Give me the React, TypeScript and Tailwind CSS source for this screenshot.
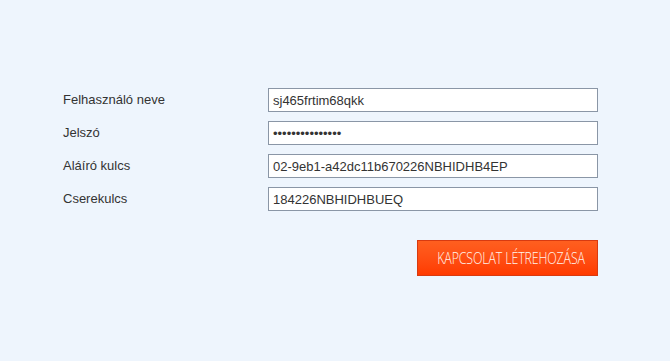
import React from "react";

const rows = [
  { label: "Felhasználó neve", value: "sj465frtim68qkk", type: "text" },
  { label: "Jelszó", value: "abcdefghijklmno", type: "password" },
  { label: "Aláíró kulcs", value: "02-9eb1-a42dc11b670226NBHIDHB4EP", type: "text" },
  { label: "Cserekulcs", value: "184226NBHIDHBUEQ", type: "text" },
];

export default function App() {
  return (
    <div className="w-[670px] h-[361px] bg-[#eef5fd] pt-[88px] pl-[63px] font-['Liberation_Sans',Arial,sans-serif]">
      <div className="w-[535px] flex flex-col gap-[9px]">
        {rows.map((r) => (
          <div key={r.label} className="flex items-center h-[24px]">
            <div className="w-[205px] text-[13px] text-[#333]">{r.label}</div>
            <input
              readOnly
              type={r.type}
              value={r.value}
              className="w-[330px] h-[24px] border border-[#8a96a6] bg-white px-[4px] text-[13px] text-[#333] outline-none font-['Liberation_Sans',Arial,sans-serif]"
            />
          </div>
        ))}
        <div className="flex justify-end mt-[20px]">
          <button className="w-[181px] h-[36px] pl-[8px] border border-[#d83a10] bg-gradient-to-b from-[#ff5f1f] to-[#ff3a00] text-[#fff4ec] flex items-center justify-center overflow-hidden">
            <span className="inline-block scale-x-[0.73] whitespace-nowrap text-[17px] font-light font-['Open_Sans',sans-serif] tracking-[-0.2px]">
              KAPCSOLAT LÉTREHOZÁSA
            </span>
          </button>
        </div>
      </div>
    </div>
  );
}
